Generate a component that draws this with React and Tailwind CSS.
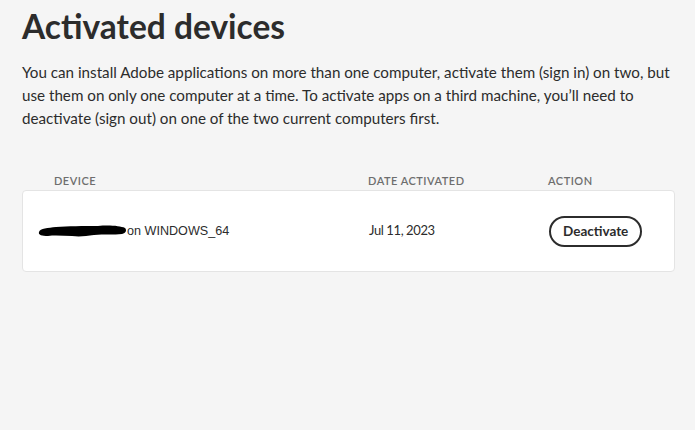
export default function App() {
  return (
    <div className="w-[695px] h-[430px] bg-[#f5f5f5] overflow-hidden text-[#2c2c2c]" style={{ fontFamily: 'Lato, "Open Sans", sans-serif' }}>
      <div className="pl-[22px] pr-[16px]">
        <h1 className="text-[33.5px] leading-[40px] font-bold pt-[6px] text-[#2c2c2c]">Activated devices</h1>
        <p className="mt-[15px] text-[15.2px] leading-[23px] text-[#2c2c2c]">
          You can install Adobe applications on more than one computer, activate them (sign in) on two, but use them on only one computer at a time. To activate apps on a third machine, you’ll need to deactivate (sign out) on one of the two current computers first.
        </p>
        <div className="mt-[42px] w-[653px]">
          <div className="flex text-[11px] font-semibold tracking-[0.5px] text-[#6e6e6e] h-[18px] items-center">
            <div className="w-[346px] pl-[32px]">DEVICE</div>
            <div className="w-[180px]">DATE ACTIVATED</div>
            <div>ACTION</div>
          </div>
          <div className="h-[82px] bg-white border border-[#e4e4e4] rounded-[4px] flex items-center">
            <div className="w-[346px] pl-[15px] flex items-center">
              <svg width="89" height="16" viewBox="0 0 89 16" className="shrink-0">
                <path d="M1 9 C2 5, 10 5, 18 4 C30 3, 45 3, 60 3 C72 2, 82 3, 87 5 C89 7, 88 10, 84 11 C76 12, 66 11, 56 12 C48 13, 42 14, 34 13 C26 13, 18 12, 10 13 C4 13, 0 12, 1 9 Z" fill="#000" />
              </svg>
              <span className="text-[12.6px] text-[#2c2c2c]" style={{ fontFamily: '"Liberation Sans", Arial, sans-serif' }}>on WINDOWS_64</span>
            </div>
            <div className="w-[180px] text-[13px] tracking-[-0.4px]">Jul 11, 2023</div>
            <div>
              <button className="h-[31px] px-[12px] border-2 border-[#2c2c2c] rounded-full text-[13.5px] font-bold text-[#2c2c2c] bg-white">Deactivate</button>
            </div>
          </div>
        </div>
      </div>
    </div>
  );
}
